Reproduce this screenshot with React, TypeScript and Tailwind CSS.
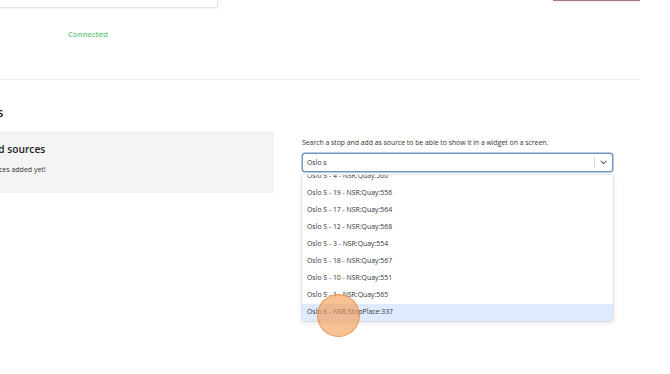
import React from 'react';

const options = [
  'Oslo S - 4 - NSR:Quay:560',
  'Oslo S - 19 - NSR:Quay:556',
  'Oslo S - 17 - NSR:Quay:564',
  'Oslo S - 12 - NSR:Quay:568',
  'Oslo S - 3 - NSR:Quay:554',
  'Oslo S - 18 - NSR:Quay:567',
  'Oslo S - 10 - NSR:Quay:551',
  'Oslo S - 1 - NSR:Quay:565',
  'Oslo S - NSR:StopPlace:337',
];

const ChevronDown = () => (
  <svg width="7" height="5" viewBox="0 0 10 7" fill="none">
    <path d="M1.5 1.5L5 5l3.5-3.5" stroke="#666" strokeWidth="1.6" strokeLinecap="round" strokeLinejoin="round" />
  </svg>
);

export default function App() {
  return (
    <div className="relative w-[670px] h-[374px] overflow-hidden bg-white font-['Open_Sans',sans-serif] text-[#333]">
      <div className="w-[640px]">
        {/* connection section */}
        <div className="h-[80px] border-b border-[#eeeeee]">
          <div className="flex items-start">
            <div className="w-[218px] h-[8px] border-r border-b border-[#e2e2e2] rounded-br-[2px] shadow-[0_1px_2px_rgba(0,0,0,0.06)]" />
            <div className="flex-1" />
            <div className="w-[87px] h-[1px] bg-[#a87878] shadow-[0_1px_3px_rgba(0,0,0,0.15)]" />
          </div>
          <div className="ml-[68px] mt-[21px] text-[7.7px] font-semibold text-[#6cc487] leading-[10px]">
            Connected
          </div>
        </div>

        {/* sources section */}
        <div className="flex gap-[28px]">
          <div className="w-[318px] -ml-[44px] shrink-0">
            <h2 className="mt-[24px] text-[12.5px] font-semibold leading-[17px] text-[#222]">Sources</h2>
            <div className="mt-[10px] h-[62px] bg-[#f4f4f4] px-[17px] pt-[11px]">
              <h3 className="text-[10.2px] font-semibold leading-[14px] text-[#222]">Added sources</h3>
              <p className="mt-[9px] text-[7px] leading-[9px] text-[#333]">No sources added yet!</p>
            </div>
          </div>

          <div className="w-[311px] shrink-0 pt-[58px]">
            <p className="text-[6.85px] leading-[10px] text-[#333]">
              Search a stop and add as source to be able to show it in a widget on a screen.
            </p>
            <div className="mt-[5px] h-[19px] flex items-center border border-[#6f97c0] rounded-[3px] bg-white shadow-[0_0_0_0.5px_#6f97c0]">
              <span className="flex-1 pl-[4px] pt-px text-[6.9px] text-[#333] leading-[10px]">Oslo s</span>
              <span className="w-px h-[9px] bg-[#d0d0d0]" />
              <span className="w-[17px] flex items-center justify-center">
                <ChevronDown />
              </span>
            </div>
            <div className="mt-[3px] h-[146px] overflow-hidden flex flex-col justify-end bg-white rounded-[2px] shadow-[0_0_0_1px_rgba(0,0,0,0.08),0_2px_6px_rgba(0,0,0,0.1)]">
              {options.map((o, i) => (
                <div
                  key={o}
                  className={
                    i === options.length - 1
                      ? 'h-[17px] shrink-0 flex items-center px-[5px] text-[6.9px] text-[#333] bg-[#deebff]'
                      : 'h-[17px] shrink-0 flex items-center px-[5px] text-[6.9px] text-[#333]'
                  }
                >
                  {o}
                </div>
              ))}
            </div>
          </div>
        </div>
      </div>

      {/* click indicator */}
      <div className="absolute left-[317px] top-[294px] w-[43px] h-[43px] rounded-full bg-[#f39a4f]/60 border border-[#e9883f]/70" />
    </div>
  );
}
